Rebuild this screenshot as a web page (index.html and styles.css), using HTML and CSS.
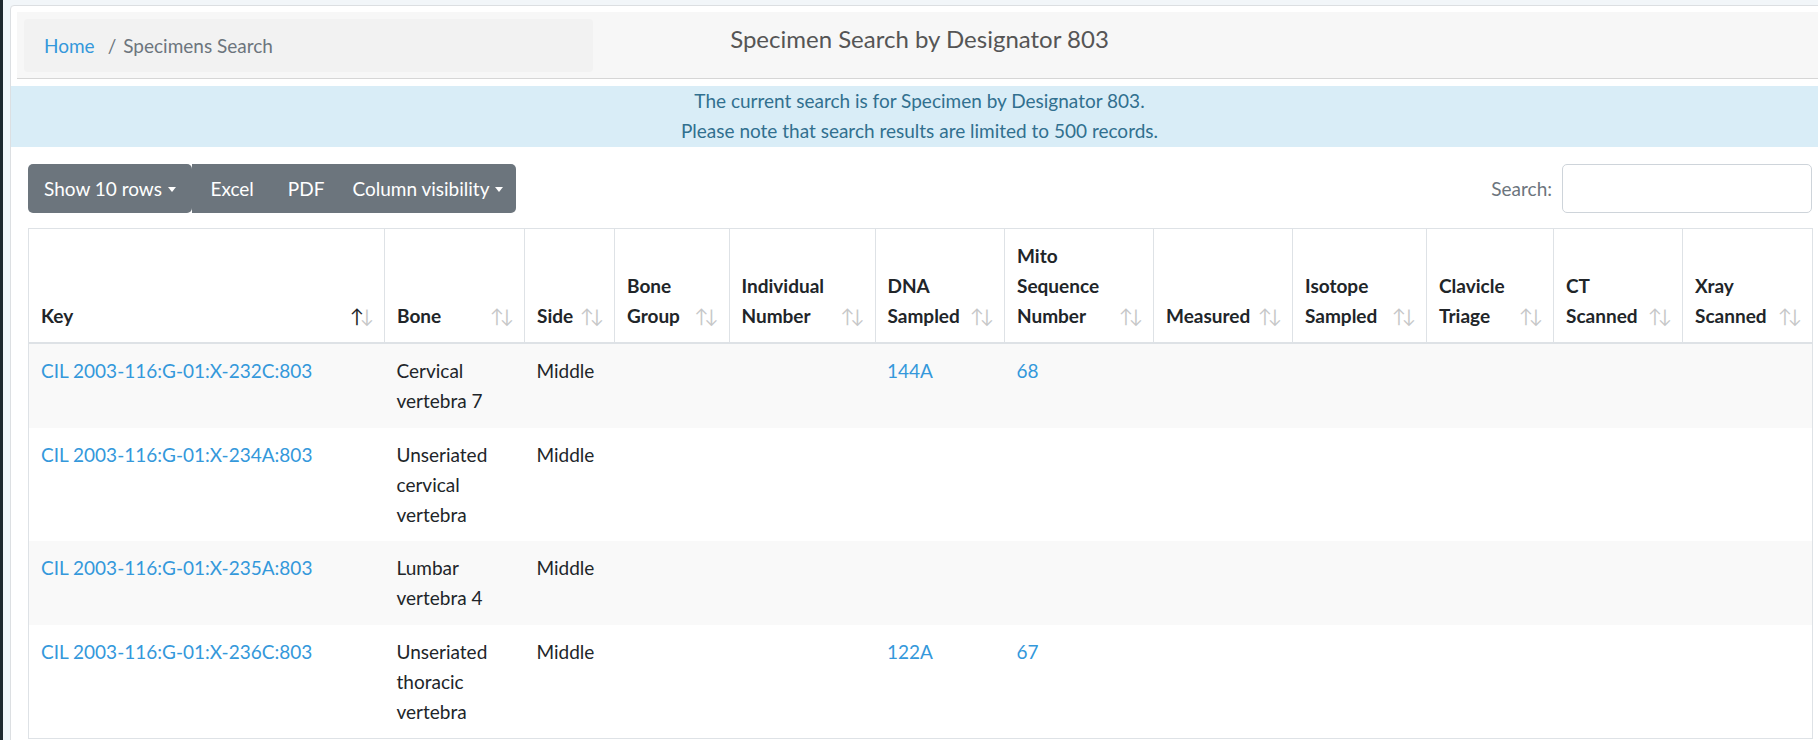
FILE: index.html
```html
<!DOCTYPE html>
<html lang="en">
<head>
<meta charset="utf-8">
<title>Specimen Search</title>
<link rel="stylesheet" href="styles.css">
</head>
<body>
<div class="layout">
  <div class="sidebar-edge"></div>
  <main class="main">
    <div class="card">
      <header class="page-header">
        <nav class="crumbs"><a href="#">Home</a><span class="sep">/</span><span class="current">Specimens Search</span></nav>
        <h1 class="title">Specimen Search by Designator 803</h1>
        <div class="spacer"></div>
      </header>
      <div class="notice">
        <p>The current search is for Specimen by Designator 803.</p>
        <p>Please note that search results are limited to 500 records.</p>
      </div>
      <section class="results">
        <div class="toolbar">
          <div class="btns">
            <button class="btn btn-first caret">Show 10 rows</button>
            <div class="btn-group">
              <button class="btn btn-excel">Excel</button>
              <button class="btn btn-pdf">PDF</button>
              <button class="btn btn-cols caret">Column visibility</button>
            </div>
          </div>
          <label class="search">Search: <input type="search" class="search-input"></label>
        </div>
        <table class="grid">
          <colgroup>
            <col class="c-key"><col class="c-bone"><col class="c-side"><col class="c-group"><col class="c-ind"><col class="c-dna"><col class="c-mito"><col class="c-meas"><col class="c-iso"><col class="c-clav"><col class="c-ct"><col class="c-xray">
          </colgroup>
          <thead>
            <tr>
              <th class="sort asc">Key</th>
              <th class="sort">Bone</th>
              <th class="sort">Side</th>
              <th class="sort">Bone<br>Group</th>
              <th class="sort">Individual<br>Number</th>
              <th class="sort">DNA<br>Sampled</th>
              <th class="sort">Mito<br>Sequence<br>Number</th>
              <th class="sort">Measured</th>
              <th class="sort">Isotope<br>Sampled</th>
              <th class="sort">Clavicle<br>Triage</th>
              <th class="sort">CT<br>Scanned</th>
              <th class="sort">Xray<br>Scanned</th>
            </tr>
          </thead>
          <tbody>
            <tr>
              <td><a href="#">CIL 2003-116:G-01:X-232C:803</a></td>
              <td>Cervical vertebra 7</td>
              <td>Middle</td>
              <td></td><td></td>
              <td><a href="#">144A</a></td>
              <td><a href="#">68</a></td>
              <td></td><td></td><td></td><td></td><td></td>
            </tr>
            <tr>
              <td><a href="#">CIL 2003-116:G-01:X-234A:803</a></td>
              <td>Unseriated cervical vertebra</td>
              <td>Middle</td>
              <td></td><td></td><td></td><td></td>
              <td></td><td></td><td></td><td></td><td></td>
            </tr>
            <tr>
              <td><a href="#">CIL 2003-116:G-01:X-235A:803</a></td>
              <td>Lumbar vertebra 4</td>
              <td>Middle</td>
              <td></td><td></td><td></td><td></td>
              <td></td><td></td><td></td><td></td><td></td>
            </tr>
            <tr>
              <td><a href="#">CIL 2003-116:G-01:X-236C:803</a></td>
              <td>Unseriated thoracic vertebra</td>
              <td>Middle</td>
              <td></td><td></td>
              <td><a href="#">122A</a></td>
              <td><a href="#">67</a></td>
              <td></td><td></td><td></td><td></td><td></td>
            </tr>
          </tbody>
        </table>
      </section>
    </div>
  </main>
</div>
</body>
</html>
```

FILE: styles.css
```css
html, body {
  margin: 0;
  padding: 0;
  overflow: hidden;
}
body {
  background: #f2f6f9;
  font-family: Lato, "Noto Sans", "Liberation Sans", sans-serif;
  font-size: 19px;
  line-height: 30px;
  color: #212529;
}
a {
  color: #3498db;
  text-decoration: none;
}
.layout {
  display: flex;
  align-items: stretch;
  min-height: 740px;
}
.sidebar-edge {
  flex: 0 0 3px;
  background: #1f292e;
}
.main {
  flex: 0 0 auto;
  padding: 5px 0 0 7px;
}
.card {
  box-sizing: border-box;
  width: 1819px;
  min-height: 760px;
  background: #fff;
  border: 1px solid #dcdfe2;
  border-radius: 4px;
  padding-top: 6px;
}
.page-header {
  margin: 0 6px;
  display: grid;
  grid-template-columns: 1fr 1fr 1fr;
  align-items: start;
  padding: 7px 7px 6px;
  background: #f7f7f7;
  border-bottom: 1px solid #d6d6d6;
}
.crumbs {
  height: 53px;
  margin-right: 28px;
  background: #f2f2f2;
  border-radius: 4px;
  padding: 0 20px;
  display: flex;
  align-items: center;
}
.crumbs .sep {
  color: #6c757d;
  margin: 0 7px 0 13px;
}
.crumbs .current {
  color: #6c757d;
}
.title {
  margin: 6px 0 0;
  font-size: 24px;
  line-height: 28px;
  font-weight: 400;
  color: #555;
  text-align: center;
}
.notice {
  margin-top: 7px;
  background: #d9edf7;
  color: #31708f;
  text-align: center;
  padding: 0 0 1px;
}
.notice p {
  margin: 0;
}
.results {
  padding: 17px 16px 0 17px;
}
.toolbar {
  display: flex;
  justify-content: space-between;
  align-items: center;
  margin-bottom: 15px;
}
.btns {
  display: flex;
}
.btn-group {
  display: flex;
  background: #6c757d;
  border-radius: 0 5px 5px 0;
}
.btn {
  font: inherit;
  line-height: 30px;
  color: #fff;
  background: #6c757d;
  border: 0;
  padding: 9.5px 16px;
  margin: 0;
}
.btn-first {
  border-radius: 5px;
}
.btn-group .btn {
  background: transparent;
}
.btn-group .btn-excel {
  padding-left: 18.5px;
  padding-right: 17px;
}
.btn-group .btn-pdf {
  padding-left: 17px;
  padding-right: 14px;
}
.btn-group .btn-cols {
  padding-left: 14px;
  padding-right: 13px;
}
.caret::after {
  content: "";
  display: inline-block;
  margin-left: 6px;
  vertical-align: 4px;
  border-top: 5px solid #fff;
  border-left: 4.5px solid transparent;
  border-right: 4.5px solid transparent;
}
.search {
  display: flex;
  align-items: center;
  gap: 10px;
  color: #6c757d;
}
.search-input {
  box-sizing: border-box;
  width: 250px;
  height: 49px;
  border: 1px solid #ced4da;
  border-radius: 5px;
  font: inherit;
  padding: 0 12px;
}
.grid {
  width: 100%;
  table-layout: fixed;
  border-collapse: collapse;
  border: 1px solid #dee2e6;
}
.c-key { width: 356px; }
.c-bone { width: 140px; }
.c-side { width: 90px; }
.c-group { width: 114.5px; }
.c-ind { width: 146px; }
.c-dna { width: 129.5px; }
.c-mito { width: 149px; }
.c-meas { width: 139px; }
.c-iso { width: 134px; }
.c-clav { width: 127px; }
.c-ct { width: 129px; }
.c-xray { width: 130px; }
.grid th {
  position: relative;
  text-align: left;
  vertical-align: bottom;
  font-weight: 700;
  padding: 12px 30px 11px 12px;
  border: 1px solid #dee2e6;
  border-bottom: 2px solid #dee2e6;
}
.sort::before,
.sort::after {
  position: absolute;
  bottom: 11px;
  line-height: 30px;
  font-weight: 400;
  color: #212529;
  opacity: 0.25;
}
.sort::before {
  content: "\2191";
  right: 20px;
}
.sort::after {
  content: "\2193";
  right: 10px;
}
.sort.asc::before {
  opacity: 1;
}
.grid td {
  padding: 12px 12px 11.5px;
  vertical-align: top;
}
.grid tbody tr:nth-child(odd) td {
  background: #f9f9f9;
}
```
